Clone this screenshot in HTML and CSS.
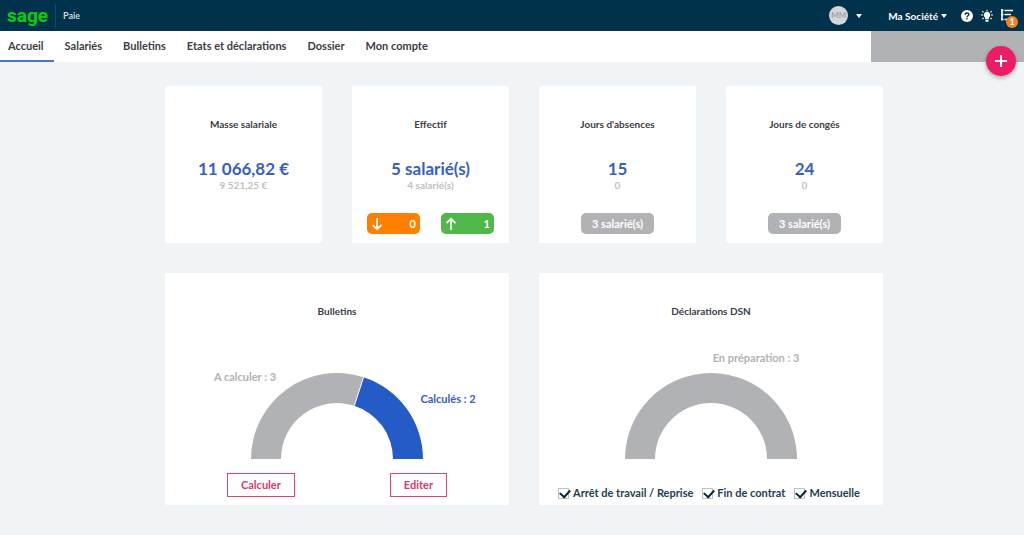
FILE: index.html
```html
<!DOCTYPE html>
<html lang="fr">
<head>
<meta charset="utf-8">
<meta name="viewport" content="width=device-width, initial-scale=1">
<title>Sage Paie</title>
<link rel="stylesheet" href="styles.css">
</head>
<body>
<header class="topbar">
  <a class="logo" href="#">sage</a>
  <span class="product">Paie</span>
  <div class="tools">
    <button class="user" type="button" aria-label="Profil"><span class="avatar">MM</span><span class="caret"></span></button>
    <button class="company" type="button">Ma Société<span class="caret small"></span></button>
    <button class="icon-button" type="button" aria-label="Aide">
      <svg width="12" height="12" viewBox="0 0 12 12"><circle cx="6" cy="6" r="6" fill="#fff"/><path d="M4.2 4.7C4.2 2.4 7.9 2.5 7.8 4.6C7.8 5.8 6 5.8 6 7.2" fill="none" stroke="#00324b" stroke-width="1.4"/><rect x="5.3" y="8" width="1.4" height="1.4" fill="#00324b"/></svg>
    </button>
    <button class="icon-button" type="button" aria-label="Astuces">
      <svg width="12" height="12" viewBox="0 0 12 12"><path d="M6 1.800a3.200 3.200 0 0 1 2 5.700L7.700 9.200H4.300L4 7.500a3.200 3.200 0 0 1 2-5.700z" fill="#fff"/><path d="M4.500 9.800h3v1.900h-3z" fill="#fff"/><path d="M6 0v1.300M1.300 1.100l1.200 1.200M10.700 1.100L9.500 2.300M0 5h2M10 5h2M1.400 9.200l1.200-1.200M10.600 9.200L9.400 8" stroke="#fff" stroke-width="1.200"/></svg>
    </button>
    <button class="icon-button tasks" type="button" aria-label="Tâches">
      <svg width="12" height="13" viewBox="0 0 12 13"><path d="M1 0v11.500M0 1.500h2.500M0 5.500h2.500M0 10.500h2.500M3.500 1.500H12M3.500 5.500H10M3.500 10.500H9" fill="none" stroke="#fff" stroke-width="1.600"/></svg>
      <span class="badge">1</span>
    </button>
  </div>
</header>
<nav class="tabs">
  <a class="tab active" href="#">Accueil</a>
  <a class="tab" href="#">Salariés</a>
  <a class="tab" href="#">Bulletins</a>
  <a class="tab" href="#">Etats et déclarations</a>
  <a class="tab" href="#">Dossier</a>
  <a class="tab" href="#">Mon compte</a>
  <div class="tabs-end">
    <button class="add" type="button" aria-label="Ajouter"><svg width="12" height="12" viewBox="0 0 12 12"><path d="M6 0v12M0 6h12" stroke="#fff" stroke-width="2"/></svg></button>
  </div>
</nav>
<main class="dashboard">
  <section class="card">
    <h2 class="title">Masse salariale</h2>
    <p class="value">11 066,82 €</p>
    <p class="previous">9 521,25 €</p>
  </section>
  <section class="card">
    <h2 class="title">Effectif</h2>
    <p class="value">5 salarié(s)</p>
    <p class="previous">4 salarié(s)</p>
    <div class="pills spread">
      <span class="pill flow out"><svg width="12" height="14" viewBox="0 0 12 14"><path d="M6 1v11M1.500 7.800L6 12.300l4.500-4.500" fill="none" stroke="#fff" stroke-width="1.700"/></svg>0</span>
      <span class="pill flow in"><svg width="12" height="14" viewBox="0 0 12 14"><path d="M6 13V2M1.500 6.200L6 1.700l4.500 4.500" fill="none" stroke="#fff" stroke-width="1.700"/></svg>1</span>
    </div>
  </section>
  <section class="card">
    <h2 class="title">Jours d'absences</h2>
    <p class="value">15</p>
    <p class="previous">0</p>
    <div class="pills"><span class="pill">3 salarié(s)</span></div>
  </section>
  <section class="card">
    <h2 class="title">Jours de congés</h2>
    <p class="value">24</p>
    <p class="previous">0</p>
    <div class="pills"><span class="pill">3 salarié(s)</span></div>
  </section>
  <section class="card wide">
    <h2 class="title">Bulletins</h2>
    <svg class="chart" viewBox="0 0 344 119">
      <path class="pending" d="M86 119A86 86 0 0 1 198.600 37.200L189.300 65.700A56 56 0 0 0 116 119z"/>
      <path class="done" d="M198.600 37.200A86 86 0 0 1 258 119H228A56 56 0 0 0 189.300 65.700z"/>
      <path class="divider" d="M198.600 37.200L189.300 65.700"/>
      <text class="label" x="80" y="41">A calculer : 3</text>
      <text class="label done" x="283" y="63">Calculés : 2</text>
    </svg>
    <div class="actions">
      <button class="action" type="button">Calculer</button>
      <button class="action" type="button">Editer</button>
    </div>
  </section>
  <section class="card wide">
    <h2 class="title">Déclarations DSN</h2>
    <svg class="chart" viewBox="0 0 344 119">
      <path class="pending" d="M86 119A86 86 0 0 1 258 119H228A56 56 0 0 0 116 119z"/>
      <text class="label" x="217" y="22">En préparation : 3</text>
    </svg>
    <div class="filters">
      <label class="filter"><input class="check" type="checkbox" checked>Arrêt de travail / Reprise</label>
      <label class="filter"><input class="check" type="checkbox" checked>Fin de contrat</label>
      <label class="filter"><input class="check" type="checkbox" checked>Mensuelle</label>
    </div>
  </section>
</main>
</body>
</html>
```
FILE: styles.css
```css
* { box-sizing: border-box; }
body {
  margin: 0;
  background: #f0f4f6;
  color: #3c3c46;
  font: 700 11px/16px Lato, "Liberation Sans", sans-serif;
}
button { padding: 0; border: 0; background: none; color: inherit; font: inherit; cursor: pointer; }
a { color: inherit; text-decoration: none; }
svg { display: block; }

.topbar { display: flex; align-items: center; height: 31px; padding: 0 11px 0 7px; background: #00324b; color: #fff; }
.logo { width: 48px; color: #00d20f; font-family: Roboto, sans-serif; font-size: 19px; line-height: 28px; }
.product { padding-left: 7px; border-left: 1px solid #1c485e; color: #ccd6db; font-size: 9px; line-height: 24px; }
.tools { display: flex; align-items: center; margin-left: auto; }
.user { display: flex; align-items: center; gap: 8px; margin-right: 26px; }
.avatar { width: 19px; height: 19px; border-radius: 50%; background: #d5d6d9; color: #a2a3a8; font-size: 8px; line-height: 19px; }
.caret { border: 3px solid transparent; border-top: 4px solid #fff; border-bottom: 0; }
.caret.small { display: inline-block; margin-left: 3px; vertical-align: 2px; }
.company { margin-right: 14px; font-size: 10px; }
.icon-button { margin-right: 8px; }
.tasks { position: relative; margin-right: 0; }
.badge { position: absolute; left: 5px; top: 7px; width: 12px; height: 12px; border-radius: 50%; background: #f5821e; color: #fff; font-size: 9px; line-height: 12px; }

.tabs { display: flex; height: 31px; background: #fff; }
.tab { margin-right: 1px; padding: 7px 10px 0; }
.tab.active { padding-left: 8px; border-bottom: 2px solid #4876cd; }
.tabs-end { position: relative; width: 153px; margin-left: auto; background: #b1b2b6; }
.add { position: absolute; right: 8px; bottom: -14px; display: grid; place-items: center; width: 30px; height: 30px; border-radius: 50%; background: #ee1c64; box-shadow: 0 2px 4px rgba(0, 0, 0, .3); }

.dashboard { display: grid; grid-template-columns: repeat(4, 1fr); gap: 30px; padding: 24px 141px 30px 165px; }
.card { min-height: 157px; padding-top: 30px; border-radius: 2px; background: #fff; text-align: center; }
.card.wide { grid-column: span 2; min-height: 232px; }
.title { margin: 0; font-size: 10px; line-height: 16px; }
.value { margin: 26px 0 0; color: #3560c4; font-size: 17px; line-height: 22px; }
.previous { margin: 0; color: #bebfc3; font-size: 10px; line-height: 11px; }
.pills { display: flex; justify-content: center; margin-top: 22px; }
.pills.spread { justify-content: space-between; padding: 0 15px; }
.pill { padding: 1px 11px 0; border-radius: 5px; background: #b1b2b6; color: #fff; line-height: 20px; }
.flow { display: flex; align-items: center; justify-content: space-between; width: 53px; padding: 1px 4px 0; }
.out { background: #ff8000; }
.in { background: #50b848; }

.chart { width: 100%; margin-top: 21px; }
.pending { fill: #b1b2b6; }
.done { fill: #255bc7; }
.divider { stroke: #fff; }
.label { fill: #b1b2b6; text-anchor: middle; }
.label.done { fill: #3560c4; }
.actions { display: flex; justify-content: space-between; padding: 14px 62px 0; }
.action { padding: 3px 13px; border: 1px solid #d9466f; color: #d9396a; }
.filters { display: flex; justify-content: center; gap: 9px; padding: 26px 4px 0 0; color: #1c3e52; white-space: nowrap; }
.filter { display: flex; align-items: center; gap: 4px; }
.check { appearance: none; width: 11px; height: 11px; margin: 0; border: 1px solid #b8c2c9; background: #fff; }
.check:checked::before { content: ""; display: block; width: 8px; height: 5px; margin: 1px 0 0 1px; border: solid #00263a; border-width: 0 0 2px 2px; transform: translateY(-1px) rotate(-48deg); }
```
